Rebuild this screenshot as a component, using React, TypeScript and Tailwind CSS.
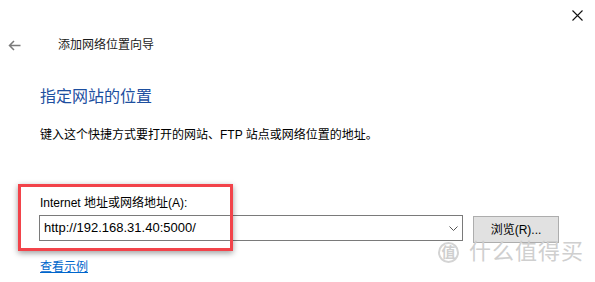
import React from "react";

const font = "[font-family:'Liberation_Sans','Noto_Sans_CJK_SC',sans-serif]";

function BackArrow() {
  return (
    <svg width="13" height="11" viewBox="0 0 13 11" fill="none" stroke="#7a7a7a" strokeWidth="1.5">
      <path d="M12.5 5.5H1.5M6 1L1.5 5.5L6 10" />
    </svg>
  );
}

function CloseIcon() {
  return (
    <svg width="11" height="11" viewBox="0 0 11 11" fill="none" stroke="#111" strokeWidth="1.1">
      <path d="M0.5 0.5L10.5 10.5M10.5 0.5L0.5 10.5" />
    </svg>
  );
}

function Chevron() {
  return (
    <svg width="9" height="5" viewBox="0 0 9 5" fill="none" stroke="#555" strokeWidth="1">
      <path d="M0.5 0.5L4.5 4.5L8.5 0.5" />
    </svg>
  );
}

export default function App() {
  return (
    <div className={`relative h-[282px] w-[595px] overflow-hidden bg-white text-[12px] text-black ${font}`}>
      <div className="flex h-[30px] items-start justify-end pr-[12px] pt-[10px]">
        <CloseIcon />
      </div>

      <div className="flex h-[30px] items-center">
        <span className="ml-[8px] flex w-[50px]">
          <BackArrow />
        </span>
        <span className="text-[12px] leading-[16px] text-[#1a1a1a]">添加网络位置向导</span>
      </div>

      <div className="px-[40px]">
        <h1 className="mt-[26px] text-[16px] leading-[22px] font-normal text-[#1d4f9f]">指定网站的位置</h1>
        <p className="mt-[19px] leading-[16px]">键入这个快捷方式要打开的网站、FTP 站点或网络位置的地址。</p>

        <p className="mt-[52px] leading-[16px]">Internet 地址或网络地址(A):</p>
        <div className="mt-[4px] flex items-start">
          <div className="-ml-[1px] flex h-[26px] w-[424px] shrink-0 items-center justify-between border border-[#7a7a7a] bg-white pl-[4px] pr-[4px]">
            <span className="text-[13px] leading-[16px]">http://192.168.31.40:5000/</span>
            <span className="flex"><Chevron /></span>
          </div>
          <button
            type="button"
            className="ml-[10px] mt-[1px] flex h-[27px] w-[86px] shrink-0 items-center justify-center border border-[#adadad] bg-[#e1e1e1] text-[12px]"
          >
            浏览(R)...
          </button>
        </div>
        <a href="#" className="mt-[16px] inline-block leading-[16px] text-[#0066cc] underline">
          查看示例
        </a>
      </div>

      {/* annotation box */}
      <div className="pointer-events-none absolute left-[18px] top-[184px] h-[67px] w-[215px] border-[3px] border-[#f2434a] shadow-[0_2px_6px_rgba(0,0,0,0.4)]" />

      {/* watermark */}
      <div className="pointer-events-none absolute left-[438px] top-[240px] flex items-center gap-[10px] text-[#cfcfcf]">
        <span className="flex h-[21px] w-[21px] items-center justify-center rounded-full border-2 border-[#d4d4d4] text-[14px] font-bold leading-none">
          值
        </span>
        <span className="text-[22px] leading-[24px] tracking-[1px]">什么值得买</span>
      </div>
    </div>
  );
}
